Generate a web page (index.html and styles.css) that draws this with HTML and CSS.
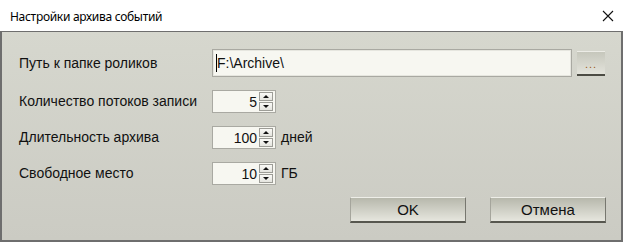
FILE: index.html
```
<!DOCTYPE html>
<html lang="ru">

<head>
    <meta charset="UTF-8">
    <title>Настройки архива событий</title>
    <link rel="stylesheet" href="styles.css">
</head>

<body>
    <div class="window">
        <div class="titlebar">
            <span class="title">Настройки архива событий</span>
            <span class="close">
                <svg width="12" height="12" viewBox="0 0 12 12">
                    <path d="M1 1 L11 11 M11 1 L1 11" stroke="#111" stroke-width="1.1" fill="none" />
                </svg>
            </span>
        </div>

        <div class="client">
            <div class="form">
                <label class="label">Путь к папке роликов</label>
                <div class="path-row">
                    <div class="textbox"><span class="caret"></span>F:\Archive\</div>
                    <div class="browse">...</div>
                </div>

                <label class="label">Количество потоков записи</label>
                <div class="spin-row">
                    <div class="spinbox">
                        <span class="value">5</span>
                        <span class="arrows"><span class="up"></span><span class="down"></span></span>
                    </div>
                </div>

                <label class="label">Длительность архива</label>
                <div class="spin-row">
                    <div class="spinbox">
                        <span class="value">100</span>
                        <span class="arrows"><span class="up"></span><span class="down"></span></span>
                    </div>
                    <span class="unit">дней</span>
                </div>

                <label class="label">Свободное место</label>
                <div class="spin-row">
                    <div class="spinbox">
                        <span class="value">10</span>
                        <span class="arrows"><span class="up"></span><span class="down"></span></span>
                    </div>
                    <span class="unit">ГБ</span>
                </div>
            </div>

            <div class="buttons">
                <button type="button" class="btn">OK</button>
                <button type="button" class="btn">Отмена</button>
            </div>
        </div>
    </div>
</body>

</html>
```

FILE: styles.css
```
body {
    margin: 0;
    font-family: "Liberation Sans", Arial, sans-serif;
    font-size: 14px;
    color: #111;
    background-color: #fff;
}

.window {
    width: 623px;
    height: 242px;
    display: flex;
    flex-direction: column;
}

.titlebar {
    height: 31px;
    display: flex;
    align-items: center;
    justify-content: space-between;
    background-color: #fff;
    padding: 0 9px 0 10px;
    box-sizing: border-box;
}

.title {
    font-family: "Noto Sans", sans-serif;
    font-size: 12px;
    letter-spacing: -0.3px;
    color: #000;
    margin-top: 1px;
}

.close {
    display: flex;
    margin-top: 1px;
}

.client {
    flex: 1;
    border: 2px solid #6e6e6e;
    border-top-width: 1px;
    background: linear-gradient(#d6d7ce, #cbcbc3);
    padding: 17px 15px 0 17px;
    box-sizing: border-box;
}

.form {
    display: grid;
    grid-template-columns: 193px 1fr;
    align-items: center;
    row-gap: 13px;
}

.label {
    display: block;
    padding-bottom: 1px;
}

.path-row {
    display: flex;
    align-items: center;
    gap: 5px;
}

.textbox {
    width: 360px;
    height: 28px;
    box-sizing: border-box;
    border: 1px solid #a9a9a2;
    box-shadow: inset 0 0 0 1px #e6e6df;
    background-color: #f7f7f1;
    display: flex;
    align-items: center;
    padding-left: 3px;
}

.caret {
    width: 1px;
    height: 18px;
    background-color: #000;
}

.browse {
    width: 28px;
    height: 25px;
    box-sizing: border-box;
    border-top: 1px solid #ecece6;
    border-bottom: 2px solid #4c4c44;
    background: linear-gradient(#c6c7bc, #e3e3db);
    color: #9a5a1c;
    font-size: 11px;
    letter-spacing: 1px;
    display: flex;
    align-items: center;
    justify-content: center;
    padding-top: 3px;
}

.spin-row {
    display: flex;
    align-items: center;
    gap: 5px;
}

.spinbox {
    width: 64px;
    height: 23px;
    box-sizing: border-box;
    border: 1px solid #a9a9a2;
    background-color: #f7f7f1;
    display: flex;
    align-items: center;
    justify-content: flex-end;
    padding-right: 2px;
}

.value {
    margin-right: 2px;
}

.arrows {
    display: flex;
    flex-direction: column;
    gap: 1px;
}

.arrows span {
    width: 14px;
    height: 9px;
    box-sizing: border-box;
    border: 1px solid #9d9d97;
    background: linear-gradient(#fafaf7, #e4e4de);
    display: flex;
    align-items: center;
    justify-content: center;
}

.arrows .up::after {
    content: "";
    border-left: 3px solid transparent;
    border-right: 3px solid transparent;
    border-bottom: 3px solid #111;
}

.arrows .down::after {
    content: "";
    border-left: 3px solid transparent;
    border-right: 3px solid transparent;
    border-top: 3px solid #111;
}

.unit {
    padding-bottom: 1px;
}

.buttons {
    display: flex;
    justify-content: flex-end;
    gap: 24px;
    margin-top: 12px;
}

.btn {
    width: 116px;
    height: 26px;
    box-sizing: border-box;
    border: none;
    border-top: 1px solid #eeeee8;
    border-right: 1px solid #77776f;
    border-bottom: 2px solid #57574f;
    border-left: 1px solid #a5a59c;
    background: linear-gradient(#b7b8ac, #e6e6de);
    font-family: "Liberation Sans", Arial, sans-serif;
    font-size: 15px;
    font-weight: normal;
    color: #111;
    padding: 0;
    cursor: pointer;
}
```
